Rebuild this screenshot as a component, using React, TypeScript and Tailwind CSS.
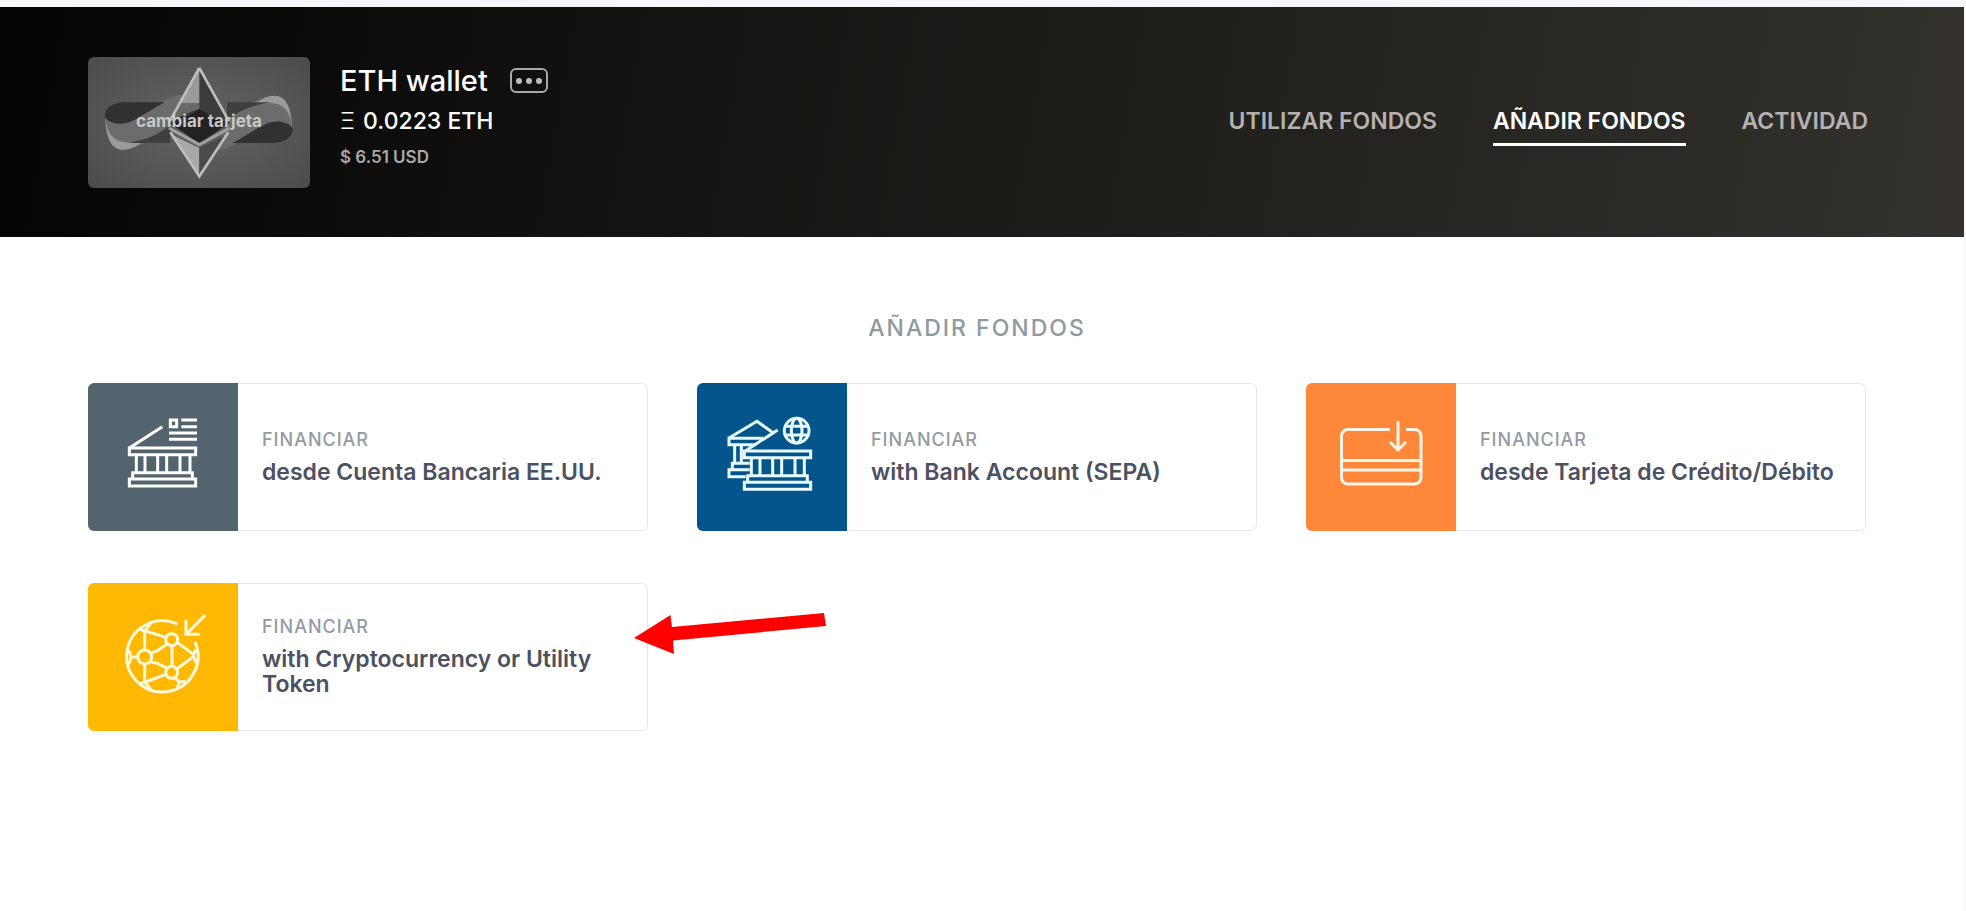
const UsBankIcon = () => (
  <svg viewBox="9 21 300 300" className="w-[100px] h-[100px]" fill="none" stroke="#fff" strokeWidth="9" aria-hidden="true">
    <path d="M58 144 L157 80" />
    <path d="M58 144H257V164H58Z" />
    <path d="M79 164V218M105 164V218M143 164V218M170 164V218M210 164V218M240 164V218" />
    <path d="M68 237V218H247V237" />
    <path d="M58 237H257V258H58Z" />
    <path d="M181 60H200V80H181Z" />
    <path d="M214 60H261M214 80H261M177 99H261M177 118H261" />
  </svg>
);

const SepaBankIcon = () => (
  <svg viewBox="19 21 300 300" className="w-[100px] h-[100px]" fill="none" stroke="#e8fbff" strokeWidth="9" aria-hidden="true">
    <path d="M40 114 L124 64 L172 98" />
    <path d="M142 115H40V134H122" />
    <path d="M57 134V190M77 134V190" />
    <path d="M102 190H50V209" />
    <path d="M102 209H40V230H90" />
    <path d="M90 152 L186 90" />
    <path d="M86 153H285V173H86Z" />
    <path d="M107 173V227M133 173V227M171 173V227M198 173V227M238 173V227M266 173V227" />
    <path d="M96 247V227H275V247" />
    <path d="M86 247H285V268H86Z" />
    <circle cx="243" cy="92" r="37" />
    <ellipse cx="243" cy="92" rx="16" ry="37" />
    <path d="M210 79H276M210 105H276" />
  </svg>
);

const CreditCardIcon = () => (
  <svg viewBox="0 0 100 100" className="w-[100px] h-[100px]" fill="none" stroke="#fff6e8" strokeWidth="3" aria-hidden="true">
    <path d="M59 22.500H17A6.500 6.500 0 0 0 10.500 29V70.500A6.500 6.500 0 0 0 17 77H83.500A6.500 6.500 0 0 0 90 70.500V29A6.500 6.500 0 0 0 83.500 22.500H75" />
    <path d="M10.500 53.500H90M10.500 63H90" />
    <path d="M67 14.500V42M59 35L67 43L75 35" />
  </svg>
);

const CryptoIcon = () => (
  <svg viewBox="9 18 300 300" className="w-[100px] h-[100px]" fill="none" stroke="#fff9dc" strokeWidth="9" aria-hidden="true">
    <path d="M202 69A107 107 0 1 0 255 123" />
    <circle cx="104" cy="168" r="21" />
    <circle cx="185" cy="116" r="18" />
    <circle cx="185" cy="214" r="18" />
    <path d="M86 84L104 90L122 68M104 90V147M106 90L169 109" />
    <path d="M56 148L64 168L56 190M64 168H83" />
    <path d="M104 189V243M86 250L104 243L124 266M106 243L168 220" />
    <path d="M122 156L144 148L171 129M120 182L144 188L172 202M186 134V196" />
    <path d="M202 124L250 160L258 146M200 204L250 167L260 186M250 160V167" />
    <path d="M194 230L208 243L202 260M208 243L226 241" />
    <path d="M286 42L229 99M228 56V100H270" />
  </svg>
);

const WalletCard = () => (
  <svg viewBox="53 49 666 393" className="block w-full h-full" aria-hidden="true">
    <defs>
      <radialGradient id="cardBg" cx="0.5" cy="0.5" r="0.7">
        <stop offset="0" stopColor="#636363" />
        <stop offset="1" stopColor="#4c4c4c" />
      </radialGradient>
    </defs>
    <rect x="53" y="49" width="666" height="393" fill="url(#cardBg)" />
    <path d="M104 230C118 250 155 256 185 240C235 212 280 165 340 162L296 250C250 290 205 327 158 327C118 327 105 280 104 230Z" fill="#6c6c6c" />
    <path d="M104 230C110 280 130 303 165 304C190 305 205 304 222 300C195 318 178 327 158 327C116 327 108 280 104 230Z" fill="#9b9b9b" />
    <g transform="rotate(180 385 246)">
      <path d="M104 230C118 250 155 256 185 240C235 212 280 165 340 162L296 250C250 290 205 327 158 327C118 327 105 280 104 230Z" fill="#6c6c6c" />
      <path d="M104 230C110 280 130 303 165 304C190 305 205 304 222 300C195 318 178 327 158 327C116 327 108 280 104 230Z" fill="#9b9b9b" />
    </g>
    <path d="M104 230C100 205 125 185 165 185H284C245 205 215 228 185 241C155 256 118 250 104 230Z" fill="#313131" />
    <path d="M666 262C670 287 645 307 605 307H486C525 287 555 264 585 251C615 236 652 242 666 262Z" fill="#313131" />
    <path d="M165 307H300V255C250 290 215 300 165 307Z" fill="#3f3f3f" />
    <path d="M605 185H470V237C520 202 555 192 605 185Z" fill="#3f3f3f" />
    <path d="M387 80L296 245L387 310L478 245Z" fill="#3b3b3b" />
    <path d="M387 80L328 187H387Z" fill="#9a9a9a" />
    <path d="M328 187H387V205C360 212 325 230 298 243Z" fill="#696969" />
    <path d="M300 280L387 322V408Z" fill="#a8a8a8" />
    <path d="M474 280L387 322V408Z" fill="#4a4a4a" />
    <path d="M340 235L387 205L440 235L478 246L387 307L296 246Z" fill="#222" />
    <path d="M296 262L387 312L478 262" fill="none" stroke="#9f9f9f" strokeWidth="9" />
    <path d="M387 82L298 242M387 82L476 242M300 275L387 407L474 275" fill="none" stroke="#bdbdbd" strokeWidth="8" />
  </svg>
);

const tabs = [
  { label: "UTILIZAR FONDOS", href: "#utilizar", active: false },
  { label: "AÑADIR FONDOS", href: "#anadir", active: true },
  { label: "ACTIVIDAD", href: "#actividad", active: false },
];

const options = [
  { title: "desde Cuenta Bancaria EE.UU.", icon: <UsBankIcon />, color: "bg-[#54646f]", highlighted: false },
  { title: "with Bank Account (SEPA)", icon: <SepaBankIcon />, color: "bg-[#04558b]", highlighted: false },
  { title: "desde Tarjeta de Crédito/Débito", icon: <CreditCardIcon />, color: "bg-[#ff873a]", highlighted: false },
  { title: "with Cryptocurrency or Utility Token", icon: <CryptoIcon />, color: "bg-[#ffb902]", highlighted: true },
];

const Header = () => (
  <header className="flex items-center justify-between h-[230px] pl-[88px] pr-24 bg-linear-[100deg] from-[#040404] via-[#1b1a17] to-[#33322d]">
    <div className="flex items-start gap-[30px]">
      <button type="button" className="relative w-[222px] h-[131px] rounded-md overflow-hidden cursor-pointer">
        <WalletCard />
        <span className="absolute inset-0 flex items-center justify-center text-[17px] font-bold text-[#c8c8c8]">
          cambiar tarjeta
        </span>
      </button>
      <div className="pt-1">
        <div className="flex items-center gap-[22px]">
          <h1 className="text-[29px] leading-10 font-medium text-white">ETH wallet</h1>
          <button
            type="button"
            aria-label="Opciones"
            className="flex items-center justify-center gap-1 w-[38px] h-[25px] border-2 border-[#a9a9a9] rounded-md"
          >
            <span className="w-[6px] h-[6px] rounded-full bg-[#bdbdbd]"></span>
            <span className="w-[6px] h-[6px] rounded-full bg-[#bdbdbd]"></span>
            <span className="w-[6px] h-[6px] rounded-full bg-[#bdbdbd]"></span>
          </button>
        </div>
        <p className="flex gap-2 text-[23px] leading-10 font-medium text-white">
          <span className="font-light">Ξ</span>
          <span>0.0223 ETH</span>
        </p>
        <p className="text-[17px] leading-8 font-semibold text-[#a8a8a8]">$ 6.51 USD</p>
      </div>
    </div>

    <nav className="flex gap-14 pt-1 text-[23px] leading-9 font-semibold">
      {tabs.map((tab) => (
        <a
          key={tab.label}
          href={tab.href}
          className={
            tab.active
              ? "pb-1 border-b-[3px] border-white text-white"
              : "pb-1 border-b-[3px] border-transparent text-[#b3b2b0]"
          }
        >
          {tab.label}
        </a>
      ))}
    </nav>
  </header>
);

export default function App() {
  return (
    <div className="min-h-screen bg-white border-t-[7px] border-r-2 border-[#f6f7fa] font-['Inter',sans-serif]">
      <Header />

      <main className="pl-[88px] pr-[98px] pt-[72px] pb-24">
        <h2 className="mb-9 text-center text-[23px] leading-[38px] font-medium tracking-[2px] text-[#8f999f]">AÑADIR FONDOS</h2>

        <ul className="grid grid-cols-3 gap-x-[49px] gap-y-[52px]">
          {options.map((option) => (
            <li key={option.title} className="relative">
              <button type="button" className="flex w-full h-[148px] text-left bg-white rounded-md overflow-hidden">
                <span className={`flex items-center justify-center shrink-0 w-[150px] h-full ${option.color}`}>
                  {option.icon}
                </span>
                <span className="flex flex-col justify-center flex-1 h-full pl-6 pr-5 pb-[6px] border border-l-0 border-[#e6e7e9] rounded-r-md">
                  <span className="mb-1 text-[18px] leading-8 font-medium tracking-[1px] text-[#929ba1]">FINANCIAR</span>
                  <span className="text-[23px] leading-[25px] font-semibold text-[#4b5162]">{option.title}</span>
                </span>
              </button>

              {option.highlighted && (
                <svg viewBox="0 0 192 42" className="absolute left-full top-[30px] -ml-[14px] w-[192px] h-[42px]" aria-hidden="true">
                  <path d="M0 25L36.500 2L38 14L190 0L192 13L39 27.500L40 41Z" fill="#fe0000" />
                </svg>
              )}
            </li>
          ))}
        </ul>
      </main>
    </div>
  );
}
